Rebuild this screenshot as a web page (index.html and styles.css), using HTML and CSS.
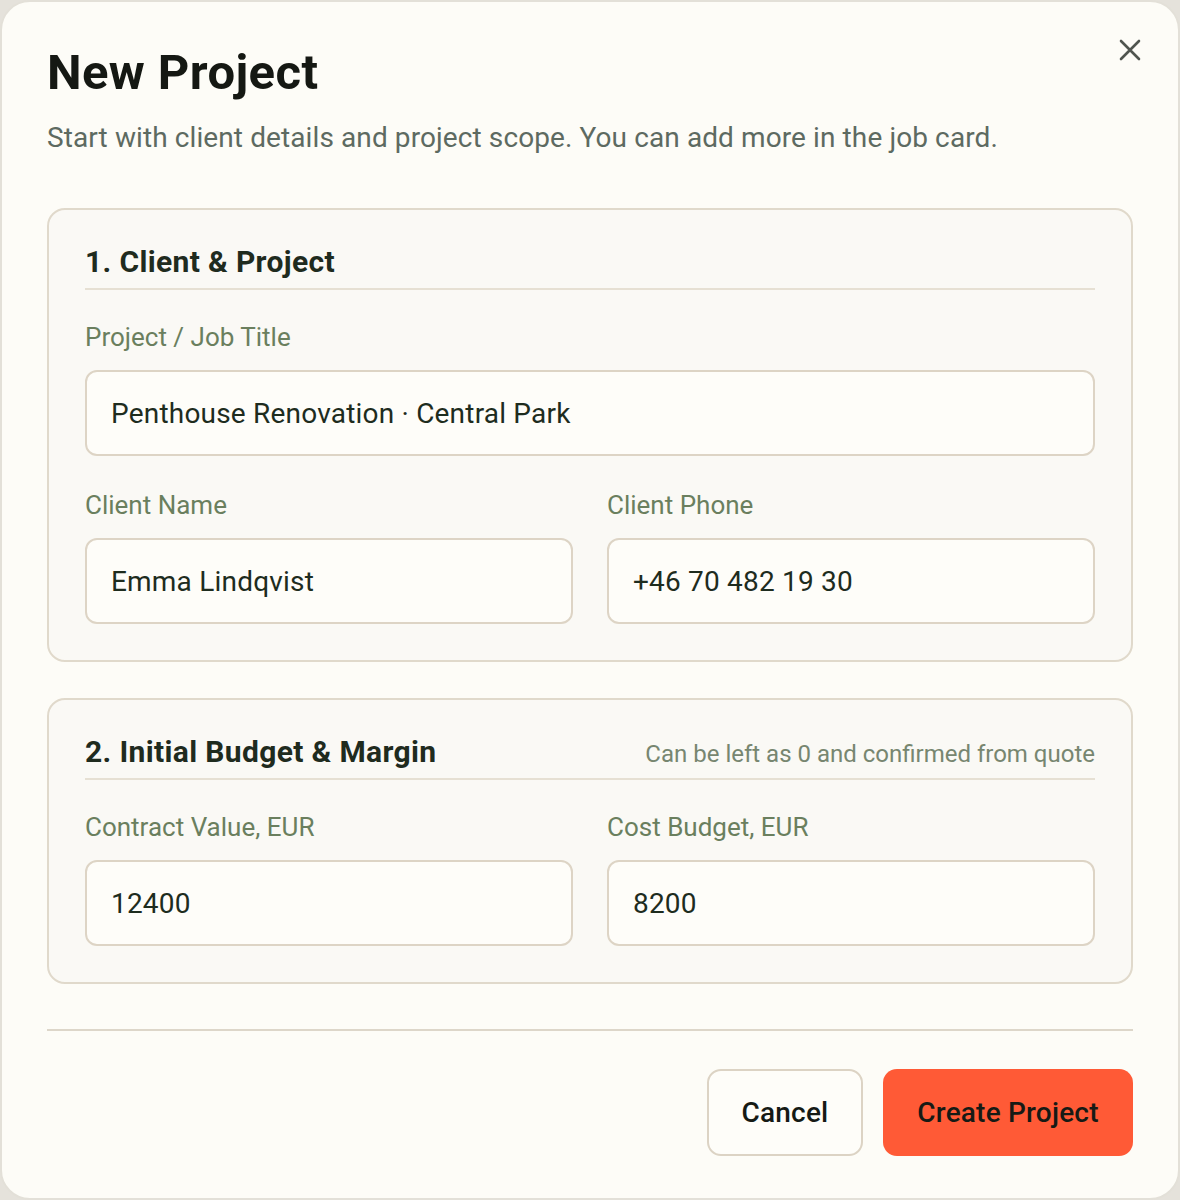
FILE: index.html
```html
<!DOCTYPE html>
<html lang="en">
<head>
<meta charset="utf-8">
<title>New Project</title>
<link rel="stylesheet" href="styles.css">
</head>
<body>
<div class="modal">
  <button class="close" aria-label="Close">
    <svg width="40" height="40" viewBox="0 0 40 40"><path d="M11 11 L29 29 M29 11 L11 29" stroke="#50554f" stroke-width="2.6" stroke-linecap="round" fill="none"/></svg>
  </button>
  <h1 class="title">New Project</h1>
  <p class="subtitle">Start with client details and project scope. You can add more in the job card.</p>

  <section class="card">
    <div class="card-head">
      <h2 class="card-title">1. Client &amp; Project</h2>
    </div>
    <div class="field">
      <label class="label">Project / Job Title</label>
      <div class="input">Penthouse Renovation · Central Park</div>
    </div>
    <div class="row">
      <div class="field">
        <label class="label">Client Name</label>
        <div class="input">Emma Lindqvist</div>
      </div>
      <div class="field">
        <label class="label">Client Phone</label>
        <div class="input">+46 70 482 19 30</div>
      </div>
    </div>
  </section>

  <section class="card card-second">
    <div class="card-head">
      <h2 class="card-title">2. Initial Budget &amp; Margin</h2>
      <span class="hint">Can be left as 0 and confirmed from quote</span>
    </div>
    <div class="row">
      <div class="field">
        <label class="label">Contract Value, EUR</label>
        <div class="input">12400</div>
      </div>
      <div class="field">
        <label class="label">Cost Budget, EUR</label>
        <div class="input">8200</div>
      </div>
    </div>
  </section>

  <div class="divider"></div>

  <div class="footer">
    <button class="btn btn-cancel">Cancel</button>
    <button class="btn btn-primary">Create Project</button>
  </div>
</div>
</body>
</html>
```

FILE: styles.css
```css
* { box-sizing: border-box; }

html, body {
  margin: 0;
  padding: 0;
}

body {
  background: #e5e2db;
  font-family: Roboto, "Noto Sans", "Liberation Sans", sans-serif;
  width: 1180px;
  height: 1200px;
  overflow: hidden;
}

.modal {
  position: relative;
  width: 1180px;
  height: 1200px;
  background: #fdfcf7;
  border: 2px solid #e3e0d8;
  border-radius: 30px;
  padding: 43px 45px 0 45px;
}

.close {
  position: absolute;
  top: 28px;
  right: 28px;
  width: 40px;
  height: 40px;
  padding: 0;
  border: 0;
  background: transparent;
  display: flex;
  align-items: center;
  justify-content: center;
}

.title {
  margin: 0;
  font-size: 49px;
  line-height: 56px;
  font-weight: 700;
  color: #151813;
  letter-spacing: 0.4px;
}

.subtitle {
  margin: 20px 0 0;
  font-size: 28px;
  line-height: 34px;
  color: #5d6a61;
  letter-spacing: 0.1px;
}

.card {
  margin-top: 53px;
  background: #faf9f5;
  border: 2px solid #e0d9cb;
  border-radius: 18px;
  padding: 34px 36px 36px;
}

.card-second {
  margin-top: 36px;
}

.card-head {
  display: flex;
  justify-content: space-between;
  align-items: baseline;
  padding-bottom: 8px;
  border-bottom: 2px solid #e6e0d3;
}

.card-title {
  margin: 0;
  font-size: 30px;
  line-height: 36px;
  font-weight: 700;
  color: #1f2b1e;
  letter-spacing: 0.35px;
}

.hint {
  font-size: 24px;
  line-height: 30px;
  color: #778670;
}

.row {
  display: grid;
  grid-template-columns: 1fr 1fr;
  column-gap: 34px;
}

.field + .row {
  margin-top: 2px;
}

.field {
  margin-top: 31px;
  display: flex;
  flex-direction: column;
}

.label {
  font-size: 26px;
  line-height: 32px;
  color: #6a7f5e;
  margin-bottom: 17px;
}

.input {
  height: 86px;
  background: #fefdf9;
  border: 2px solid #ddd4c5;
  border-radius: 12px;
  padding: 0 24px;
  display: flex;
  align-items: center;
  font-size: 28px;
  color: #1e2c1e;
  letter-spacing: 0.2px;
}

.divider {
  margin-top: 45px;
  height: 2px;
  background: #ddd6c9;
}

.footer {
  display: flex;
  justify-content: flex-end;
  gap: 20px;
  padding-top: 38px;
}

.btn {
  height: 87px;
  border-radius: 14px;
  font-family: inherit;
  font-size: 28px;
  font-weight: 500;
  color: #161a15;
  padding: 0;
  cursor: pointer;
  letter-spacing: 0.2px;
}

.btn-cancel {
  width: 156px;
  background: #fefdf9;
  border: 2px solid #dcd3c4;
}

.btn-primary {
  width: 250px;
  background: #ff5a36;
  border: 0;
}
```
